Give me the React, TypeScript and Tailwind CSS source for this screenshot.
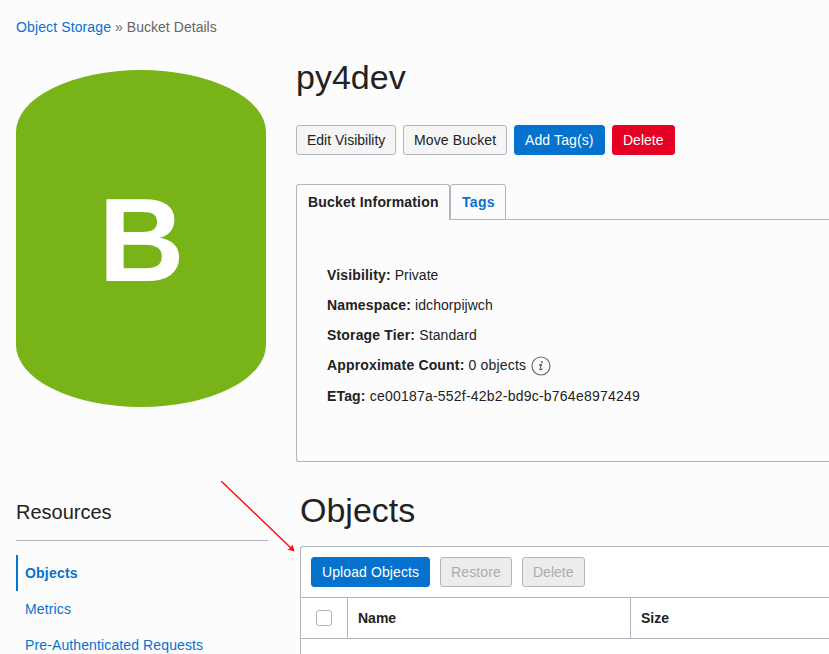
import type { ReactNode } from "react";

const base =
  "h-[30px] shrink-0 rounded-[3px] border text-[14px] leading-[28px] whitespace-nowrap";

const variants = {
  plain: "border-[#b0b6bf] bg-[#f5f5f5] text-[#222]",
  primary: "border-[#0572ce] bg-[#0572ce] text-white",
  danger: "border-[#e60023] bg-[#e60023] text-white",
  disabled: "border-[#b0b6c0] bg-[#ececec] text-[#adadad]",
};

function Button({ kind, width, children }: { kind: keyof typeof variants; width: string; children: ReactNode }) {
  return (
    <button type="button" disabled={kind === "disabled"} className={`${base} ${variants[kind]} ${width} pl-[10px] text-left`}>
      {children}
    </button>
  );
}

function Field({ label, spacing = "", children }: { label: string; spacing?: string; children: ReactNode }) {
  return (
    <div className={`flex h-[30.25px] items-center gap-1 whitespace-nowrap ${spacing}`}>
      <span className="font-bold tracking-[0.16px]">{label}:</span>
      {children}
    </div>
  );
}

function InfoIcon() {
  return (
    <svg viewBox="0 0 20 20" className="ml-[1px] h-5 w-5" fill="none">
      <circle cx="10" cy="10" r="9" stroke="#6b6b6b" strokeWidth="1.2" />
      <circle cx="11" cy="6" r="0.9" fill="#555" />
      <path d="M7.8 9.2 10.5 8.4 9 13.2Q8.8 14.6 11.6 12.9" stroke="#555" strokeWidth="1.1" />
    </svg>
  );
}

function Sidebar() {
  return (
    <aside className="w-[252px] shrink-0">
      <div className="mt-[18px] flex h-[336.5px] w-[250px] items-center justify-center rounded-[125px/62px] bg-[#78b318]">
        <span className="mt-[3px] ml-px text-[119px] leading-[120px] font-bold text-white">B</span>
      </div>
      <h2 className="mt-[92.5px] h-[42px] border-b border-[#b0b6bf] pb-4 text-[20px] leading-[26px]">Resources</h2>
      <nav className="mt-[14px] text-[#0572ce]">
        <a className="block h-9 border-l-2 border-[#0572ce] pl-[7px] leading-9 font-bold tracking-[0.2px]">Objects</a>
        <a className="block h-9 pl-[9px] leading-9 tracking-[0.13px]">Metrics</a>
        <a className="block h-9 pl-[9px] leading-9 tracking-[0.12px]">Pre-Authenticated Requests</a>
      </nav>
    </aside>
  );
}

function BucketInfo() {
  return (
    <section className="mt-[29px]">
      <div className="flex h-[36px]">
        <div className="z-10 h-[36px] w-[154px] rounded-t-[3px] border border-b-0 border-[#b0b6bf] bg-[#fcfcfc] pl-[11px] leading-[34px] font-bold tracking-[0.17px]">
          Bucket Information
        </div>
        <div className="h-[36px] w-[56px] rounded-t-[3px] border border-[#b0b6bf] pl-[11px] leading-[34px] font-bold tracking-[0.3px] text-[#0572ce]">
          Tags
        </div>
        <div className="h-[36px] grow border-b border-[#b0b6bf]" />
      </div>
      <div className="h-[242px] rounded-bl-[3px] border-b border-l border-[#b0b6bf] pt-10 pl-[30px]">
        <Field label="Visibility">Private</Field>
        <Field label="Namespace" spacing="tracking-[0.05px]">idchorpijwch</Field>
        <Field label="Storage Tier" spacing="tracking-[0.12px]">Standard</Field>
        <Field label="Approximate Count" spacing="tracking-[0.2px]">
          0 objects
          <InfoIcon />
        </Field>
        <Field label="ETag" spacing="tracking-[0.22px]">ce00187a-552f-42b2-bd9c-b764e8974249</Field>
      </div>
    </section>
  );
}

function ObjectsTable() {
  return (
    <section className="mt-[27px] ml-1">
      <h2 className="h-[42px] text-[34px] leading-[42px]">Objects</h2>
      <div className="mt-[15px] h-[120px] rounded-tl-[3px] border-t border-l border-[#b0b6bf] bg-white">
        <div className="flex h-[51px] gap-[10px] border-b border-[#b0b6bf] pt-[10px] pl-[10px]">
          <Button kind="primary" width="w-[119px] tracking-[0.1px]">Upload Objects</Button>
          <Button kind="disabled" width="w-[72px] tracking-[0.13px]">Restore</Button>
          <Button kind="disabled" width="w-[63px]">Delete</Button>
        </div>
        <div className="flex h-[41px] border-b border-[#b0b6bf] leading-[40px] font-bold">
          <div className="flex w-[47px] items-center border-r border-[#b0b6bf] pl-[15px]">
            <span className="h-4 w-4 rounded-[3px] border border-[#b0b6c0] bg-white" />
          </div>
          <div className="w-[283px] border-r border-[#b0b6bf] pl-[10px]">Name</div>
          <div className="grow pl-[10px]">Size</div>
        </div>
      </div>
    </section>
  );
}

export default function App() {
  return (
    <div className="relative h-[654px] w-full overflow-hidden bg-[#fcfcfc] font-['Liberation_Sans',Arial,sans-serif] text-[14px] text-[#222]">
      <div className="h-[52px] pt-[17px] pl-4 leading-5 tracking-[0.04px] text-[#666]">
        <a className="tracking-[0.12px] text-[#0572ce]">Object Storage</a> » Bucket Details
      </div>
      <div className="flex pl-4">
        <Sidebar />
        <main className="ml-[28px] grow">
          <h1 className="mt-[4px] h-[42px] text-[34px] leading-[42px]">py4dev</h1>
          <div className="mt-[27px] flex gap-[7px]">
            <Button kind="plain" width="w-[100px]">Edit Visibility</Button>
            <Button kind="plain" width="w-[104px] tracking-[0.12px]">Move Bucket</Button>
            <Button kind="primary" width="w-[91px] tracking-[0.12px]">Add Tag(s)</Button>
            <Button kind="danger" width="w-[63px]">Delete</Button>
          </div>
          <BucketInfo />
          <ObjectsTable />
        </main>
      </div>
      <svg className="absolute top-[480px] left-[220px] h-[73px] w-[76px]" viewBox="0 0 76 73">
        <path d="M1.3 1.2 71 68" stroke="#ff0a0a" strokeWidth="1.4" fill="none" />
        <path d="M74.6 71.4 67.2 69.6 69.8 68.4 69.9 66.9 71.2 66.8 72.6 64.4Z" fill="#ff0a0a" />
      </svg>
    </div>
  );
}
